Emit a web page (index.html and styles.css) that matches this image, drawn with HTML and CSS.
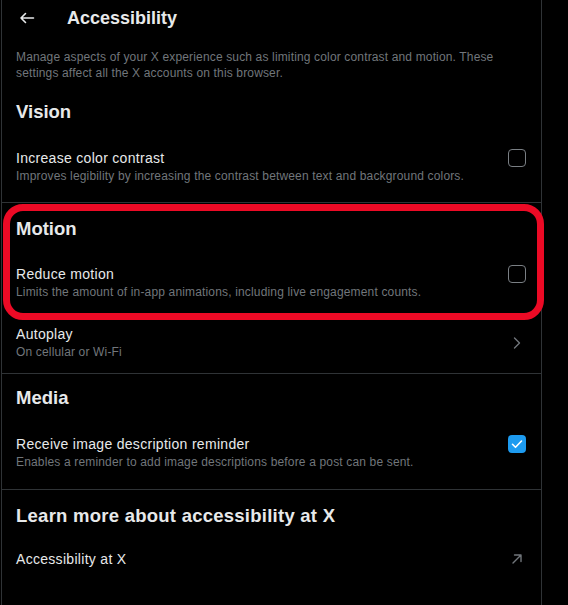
FILE: index.html
```html
<!DOCTYPE html>
<html lang="en">
<head>
<meta charset="utf-8">
<title>Accessibility</title>
<link rel="stylesheet" href="styles.css">
</head>
<body>
<div class="page">
  <header class="header">
    <span class="back">
      <svg viewBox="0 0 20 20" width="20" height="20"><path d="M16.5 10H4M8.5 5.5L4 10l4.5 4.5" fill="none" stroke="#e7e9ea" stroke-width="1.6" stroke-linecap="round" stroke-linejoin="round"/></svg>
    </span>
    <h1 class="title">Accessibility</h1>
  </header>

  <p class="intro">Manage aspects of your X experience such as limiting color contrast and motion. These settings affect all the X accounts on this browser.</p>

  <section class="section">
    <h2 class="heading">Vision</h2>
    <div class="row row-vision">
      <div class="text">
        <div class="label">Increase color contrast</div>
        <div class="sub">Improves legibility by increasing the contrast between text and background colors.</div>
      </div>
      <span class="box"></span>
    </div>
  </section>

  <section class="section motion">
    <h2 class="heading heading-motion">Motion</h2>
    <div class="row row-reduce">
      <div class="text">
        <div class="label">Reduce motion</div>
        <div class="sub">Limits the amount of in-app animations, including live engagement counts.</div>
      </div>
      <span class="box"></span>
    </div>
    <div class="row row-autoplay">
      <div class="text">
        <div class="label">Autoplay</div>
        <div class="sub">On cellular or Wi-Fi</div>
      </div>
      <svg class="chev" viewBox="0 0 20 20" width="20" height="20"><path d="M7.5 5l5 5-5 5" fill="none" stroke="#71767b" stroke-width="1.4" stroke-linecap="round" stroke-linejoin="round"/></svg>
    </div>
    <div class="highlight"></div>
  </section>

  <section class="section">
    <h2 class="heading">Media</h2>
    <div class="row row-media">
      <div class="text">
        <div class="label">Receive image description reminder</div>
        <div class="sub">Enables a reminder to add image descriptions before a post can be sent.</div>
      </div>
      <span class="box checked">
        <svg viewBox="0 0 18 18" width="18" height="18"><path d="M4.5 9.3l3 3 6-6.3" fill="none" stroke="#fff" stroke-width="1.6" stroke-linecap="round" stroke-linejoin="round"/></svg>
      </span>
    </div>
  </section>

  <section class="section last">
    <h2 class="heading heading-learn">Learn more about accessibility at X</h2>
    <div class="row row-link">
      <div class="label">Accessibility at X</div>
      <svg class="ext" viewBox="0 0 20 20" width="20" height="20"><path d="M6 14l8-8M7.5 6H14v6.5" fill="none" stroke="#71767b" stroke-width="1.4" stroke-linecap="round" stroke-linejoin="round"/></svg>
    </div>
  </section>
</div>
</body>
</html>
```

FILE: styles.css
```css
* { box-sizing: border-box; }

html, body {
  margin: 0;
  padding: 0;
  background: #000;
}

body {
  font-family: "Liberation Sans", Arial, sans-serif;
  color: #e7e9ea;
  height: 605px;
  overflow: hidden;
}

.page {
  margin-left: 1px;
  width: 541px;
  min-height: 605px;
  border-left: 1px solid #2f3336;
  border-right: 1px solid #2f3336;
}

.header {
  height: 35px;
  display: flex;
  align-items: center;
  padding: 0 14px;
}

.back {
  width: 20px;
  height: 20px;
  display: flex;
  margin-left: 1px;
}

.title {
  margin: 0 0 0 30px;
  font-size: 18px;
  font-weight: 700;
  line-height: 24px;
}

.intro {
  margin: 0;
  padding: 14px 20px 7px 14px;
  font-size: 12px;
  line-height: 16px;
  letter-spacing: 0.15px;
  color: #71767b;
}

.section {
  border-bottom: 1px solid #2f3336;
}

.section.last {
  border-bottom: none;
}

.motion {
  position: relative;
}

.heading {
  margin: 0;
  padding: 12px 14px;
  font-size: 18.5px;
  font-weight: 700;
  line-height: 24px;
}

.heading-motion {
  padding-top: 14px;
}

.heading-learn {
  padding-top: 14px;
  letter-spacing: 0.25px;
}

.row {
  display: flex;
  align-items: flex-start;
  justify-content: space-between;
  padding: 12px 15px 18px 14px;
}

.row-reduce {
  padding-top: 11px;
  padding-bottom: 11px;
}

.row-autoplay {
  align-items: center;
  padding-top: 14px;
  padding-bottom: 13px;
}

.row-media {
  padding-top: 12px;
  padding-bottom: 19px;
}

.row-link {
  align-items: center;
  padding-top: 9px;
  padding-bottom: 12px;
}

.label {
  font-size: 14px;
  line-height: 20px;
  letter-spacing: 0.3px;
}

.row-autoplay .label {
  line-height: 19px;
}

.sub {
  font-size: 12px;
  line-height: 16px;
  letter-spacing: 0.16px;
  color: #71767b;
}

.box {
  flex: none;
  width: 18px;
  height: 18px;
  margin-top: 1px;
  border: 1.5px solid #7a7f84;
  border-radius: 4px;
  display: flex;
}

.box.checked {
  border: none;
  background: #1d9bf0;
}

.chev {
  flex: none;
  margin-right: -1px;
}

.ext {
  flex: none;
  margin-right: -1px;
}

.highlight {
  position: absolute;
  left: 1px;
  top: 1px;
  width: 541px;
  height: 116px;
  border: 7px solid #ec0a25;
  border-radius: 20px;
  pointer-events: none;
}
```
